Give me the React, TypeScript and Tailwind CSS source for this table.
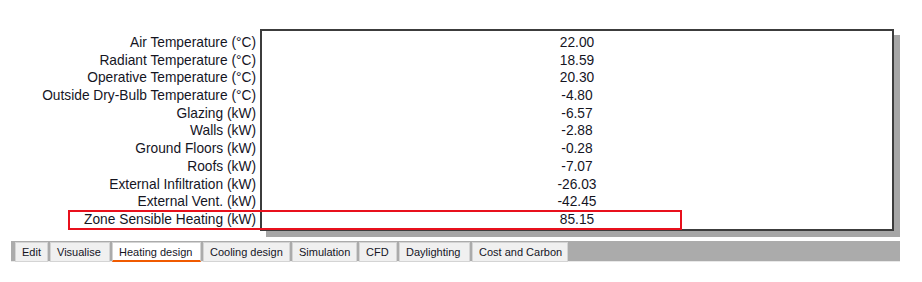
const rows: [string, string][] = [
  ['Air Temperature (°C)', '22.00'],
  ['Radiant Temperature (°C)', '18.59'],
  ['Operative Temperature (°C)', '20.30'],
  ['Outside Dry-Bulb Temperature (°C)', '-4.80'],
  ['Glazing (kW)', '-6.57'],
  ['Walls (kW)', '-2.88'],
  ['Ground Floors (kW)', '-0.28'],
  ['Roofs (kW)', '-7.07'],
  ['External Infiltration (kW)', '-26.03'],
  ['External Vent. (kW)', '-42.45'],
  ['Zone Sensible Heating (kW)', '85.15'],
];

const tabs: { label: string; w: string; active?: boolean }[] = [
  { label: 'Edit', w: 'w-[33px]' },
  { label: 'Visualise', w: 'w-[60px]' },
  { label: 'Heating design', w: 'w-[89px]', active: true },
  { label: 'Cooling design', w: 'w-[87px]' },
  { label: 'Simulation', w: 'w-[65px]' },
  { label: 'CFD', w: 'w-[38px]' },
  { label: 'Daylighting', w: 'w-[71px]' },
  { label: 'Cost and Carbon', w: 'w-[96px]' },
];

export default function App() {
  return (
    <div className="relative w-[922px] h-[282px] bg-white text-[#15151f] font-['Liberation_Sans',Arial,sans-serif] overflow-hidden">
      <div className="flex pt-[29px]">
        {/* labels */}
        <div className="w-[256px] pt-[5px] text-right text-[13.75px]">
          {rows.map(([label]) => (
            <div key={label} className="h-[17.7px] leading-[17.7px] whitespace-nowrap">
              {label}
            </div>
          ))}
        </div>
        {/* values box */}
        <div className="ml-[4px] w-[634px] h-[202px] border-2 border-[#3c3c3c] shadow-[6px_6px_0_#a6a6a6] pt-[3px] text-center text-[13.75px]">
          {rows.map(([label, value]) => (
            <div key={label} className="h-[17.7px] leading-[17.7px]">
              {value}
            </div>
          ))}
        </div>
      </div>

      {/* highlight */}
      <div className="absolute left-[68px] top-[210px] w-[614px] h-[20px] border-2 border-[#e8101c]" />

      {/* tab strip */}
      <div className="mt-[10px] ml-[11px] w-[889px] h-[21px] bg-[#ababab] flex gap-[2px] pl-[4px] pt-[1px] border-b border-[#e8e8e8] text-[11px]">
        {tabs.map((t) => (
          <div
            key={t.label}
            className={`${t.w} h-[20px] pl-[6px] leading-[19px] whitespace-nowrap border border-[#d4d4d4] ${
              t.active ? 'bg-white border-b-2 border-b-[#f05a00]' : 'bg-[#f0f0f0]'
            }`}
          >
            {t.label}
          </div>
        ))}
      </div>
    </div>
  );
}
